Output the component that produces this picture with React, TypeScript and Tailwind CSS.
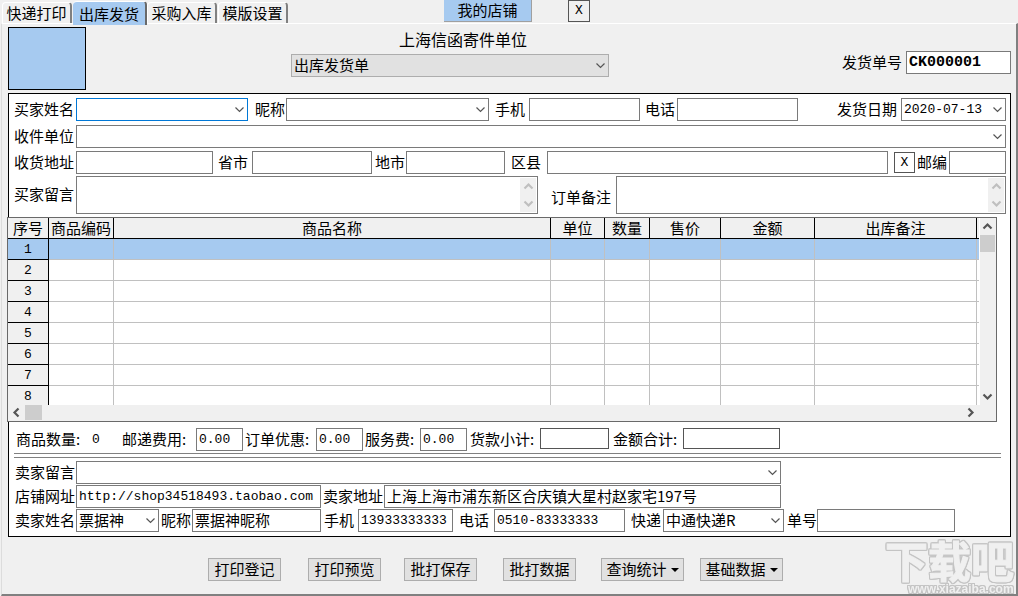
import type { ReactNode } from 'react'

const MONO = "font-['Liberation_Mono','Noto_Sans_CJK_SC',monospace]"

function Chevron({ className = '', dir = 'down', bold = false }: { className?: string; dir?: 'up' | 'down' | 'left' | 'right'; bold?: boolean }) {
  const d = {
    down: 'M1.5 3.5 L5.5 7.5 L9.5 3.5',
    up: 'M1.5 7.5 L5.5 3.5 L9.5 7.5',
    left: 'M7.5 1.5 L3.5 5.5 L7.5 9.5',
    right: 'M3.5 1.5 L7.5 5.5 L3.5 9.5',
  }[dir]
  return (
    <svg viewBox="0 0 11 11" className={`h-[11px] w-[11px] ${className}`} fill="none" stroke="currentColor" strokeWidth={bold ? 2.2 : 1.2}>
      <path d={d} />
    </svg>
  )
}

function Label({ htmlFor, className = '', children }: { htmlFor: string; className?: string; children: ReactNode }) {
  return (
    <label htmlFor={htmlFor} className={`shrink-0 whitespace-nowrap leading-[21px] ${className}`}>
      {children}
    </label>
  )
}

function Text({ id, value = '', className = '' }: { id: string; value?: string; className?: string }) {
  return (
    <input
      id={id}
      type="text"
      defaultValue={value}
      className={`h-[23px] min-w-0 border border-[#7a7a7a] bg-white px-[2px] outline-none ${className}`}
    />
  )
}

function Combo({
  id,
  value = '',
  className = '',
  look = 'border-[#7a7a7a] bg-white pb-[2px]',
}: {
  id: string
  value?: string
  className?: string
  look?: string
}) {
  return (
    <div className={`relative h-[23px] min-w-0 ${className}`}>
      <select id={id} defaultValue={value} className={`block h-full w-full appearance-none border px-[2px] outline-none ${look}`}>
        <option value={value}>{value}</option>
      </select>
      <Chevron className="pointer-events-none absolute top-[6px] right-[3px] text-[#555]" />
    </div>
  )
}

function Note({ id, className = '' }: { id: string; className?: string }) {
  return (
    <div className={`flex h-[38px] min-w-0 border border-[#7a7a7a] bg-white p-px ${className}`}>
      <textarea id={id} className="min-w-0 flex-1 resize-none outline-none" />
      <div className="flex w-4 flex-col items-center justify-between bg-[#f0f0f0] py-[3px] text-[#bfbfbf]">
        <Chevron dir="up" bold />
        <Chevron bold />
      </div>
    </div>
  )
}

const columns = [
  { name: '序号', width: 'w-[41px]' },
  { name: '商品编码', width: 'w-[65px]' },
  { name: '商品名称', width: '' },
  { name: '单位', width: 'w-[54px]' },
  { name: '数量', width: 'w-[45px]' },
  { name: '售价', width: 'w-[71px]' },
  { name: '金额', width: 'w-[94px]' },
  { name: '出库备注', width: 'w-[162px]' },
]

function Grid() {
  return (
    <div className="mt-[3px] mr-[13px] -ml-[2px] border border-[#696969] bg-white">
      <div className="flex h-[187px]">
        <div className="mr-px min-w-0 flex-1 overflow-hidden">
          <table className="w-full table-fixed border-separate border-spacing-0">
            <thead>
              <tr className="h-[21px] bg-[#f0f0f0]">
                {columns.map((c) => (
                  <th key={c.name} className={`border-r border-b border-black p-0 text-center leading-[18px] font-normal whitespace-nowrap ${c.width}`}>
                    {c.name}
                  </th>
                ))}
                <th className="w-[2px] border-b border-black p-0" />
              </tr>
            </thead>
            <tbody>
              {[1, 2, 3, 4, 5, 6, 7, 8].map((n) => (
                <tr key={n} className={`h-[21px] ${n === 1 ? 'bg-[#a6caf0]' : 'bg-white'}`}>
                  <th
                    className={`border-r border-b border-black p-0 pt-[2px] text-[13px] leading-[18px] font-normal ${MONO} ${n === 1 ? 'bg-[#a6caf0]' : 'bg-[#f0f0f0]'}`}
                  >
                    {n}
                  </th>
                  {columns.slice(1).map((c) => (
                    <td key={c.name} className="border-r border-b border-[#c0c0c0] p-0" />
                  ))}
                  <td className="border-b border-[#c0c0c0] p-0" />
                </tr>
              ))}
            </tbody>
          </table>
        </div>
        <div className="flex w-4 flex-col bg-[#f0f0f0] text-[#555]">
          <div className="flex h-[17px] items-center pl-[2px]">
            <Chevron dir="up" bold />
          </div>
          <div className="h-[17px] w-[15px] bg-[#cdcdcd]" />
          <div className="mt-auto flex h-[17px] items-center pl-[2px]">
            <Chevron bold />
          </div>
        </div>
      </div>
      <div className="flex h-4 bg-[#f0f0f0] pr-[17px] text-[#555]">
        <div className="flex h-[15px] w-[17px] items-center justify-center">
          <Chevron dir="left" bold />
        </div>
        <div className="h-[15px] w-[17px] bg-[#cdcdcd]" />
        <div className="ml-auto flex h-[15px] w-[17px] items-center justify-center">
          <Chevron dir="right" bold />
        </div>
      </div>
    </div>
  )
}

function Tab({ label, active = false }: { label: string; active?: boolean }) {
  return (
    <button
      type="button"
      className={
        active
          ? 'relative z-10 -mb-[2px] h-6 w-[74px] rounded-t-sm border-t border-r-2 border-t-white border-r-[#696969] bg-[#a6caf0] leading-[22px]'
          : 'mr-px h-[21px] w-[70px] rounded-t-sm border-t border-r-2 border-l border-t-white border-r-[#808080] border-l-white leading-5'
      }
    >
      {label}
    </button>
  )
}

function Action({ label, menu = false, className }: { label: string; menu?: boolean; className: string }) {
  return (
    <button
      type="button"
      className={`flex h-[23px] items-center justify-center gap-1 border border-[#adadad] bg-[#e1e1e1] pb-[2px] whitespace-nowrap ${className}`}
    >
      {label}
      {menu && <span className="mt-[2px] border-x-4 border-t-4 border-x-transparent border-t-black" />}
    </button>
  )
}

export default function App() {
  return (
    <div className="relative flex min-h-screen flex-col overflow-hidden bg-[#f0f0f0] font-['Noto_Sans_CJK_SC',sans-serif] text-[15px] leading-5 text-black">
      <header className="flex h-[23px] items-end pl-[2px]">
        <Tab label="快递打印" />
        <Tab label="出库发货" active />
        <Tab label="采购入库" />
        <Tab label="模版设置" />
        <button type="button" className="ml-[155px] h-[22px] w-[88px] self-start border-r border-b border-[#a0a0a0] bg-[#a6caf0] pb-[2px] leading-[18px]">
          我的店铺
        </button>
        <button type="button" className={`ml-9 h-[22px] w-[22px] self-start border border-[#555] text-[13px] ${MONO}`}>
          X
        </button>
      </header>

      <main className="ml-px flex flex-1 flex-col border-t border-r-2 border-b-2 border-l border-t-white border-r-[#808080] border-b-[#808080] border-l-[#dcdcdc] pr-[5px] pl-[6px]">
        <div className="flex items-start pt-[3px]">
          <div className="h-[63px] w-[78px] border border-black bg-[#a6caf0]" />
          <div className="ml-[205px] w-[318px]">
            <h1 className="mt-[2px] ml-[26px] h-[25px] text-center text-[16px] leading-[21px] font-normal">上海信函寄件单位</h1>
            <Combo id="docType" value="出库发货单" look="border-[#adadad] bg-[#e1e1e1] pb-[2px]" />
          </div>
          <div className="mt-6 ml-auto flex">
            <Label htmlFor="docNo" className="w-16">发货单号</Label>
            <Text id="docNo" value="CK000001" className={`w-[105px] text-[15px] font-bold ${MONO}`} />
          </div>
        </div>

        <form className="mt-[3px] border border-black bg-white pt-1 pb-1">
          <div className="flex pr-1 pl-[5px]">
            <Label htmlFor="buyer" className="w-[62px]">买家姓名</Label>
            <Combo id="buyer" className="w-[172px]" look="border-[#0078d7] bg-white" />
            <Label htmlFor="nick" className="w-[38px] pl-[7px]">昵称</Label>
            <Combo id="nick" className="w-[203px]" />
            <Label htmlFor="mobile" className="w-10 pl-[6px]">手机</Label>
            <Text id="mobile" className="w-[111px]" />
            <Label htmlFor="phone" className="w-[37px] pl-[5px]">电话</Label>
            <Text id="phone" className="w-[121px]" />
            <Label htmlFor="date" className="ml-auto w-16">发货日期</Label>
            <Combo id="date" value="2020-07-13" className={`w-[105px] text-[13px] ${MONO}`} look="border-[#7a7a7a] bg-white" />
          </div>
          <div className="mt-1 flex pr-1 pl-[5px]">
            <Label htmlFor="company" className="w-[62px]">收件单位</Label>
            <Combo id="company" className="flex-1" />
          </div>
          <div className="mt-[3px] flex pr-1 pl-[5px]">
            <Label htmlFor="address" className="w-[62px]">收货地址</Label>
            <Text id="address" className="w-[137px]" />
            <Label htmlFor="province" className="w-[39px] pl-[5px]">省市</Label>
            <Text id="province" className="w-[120px]" />
            <Label htmlFor="city" className="w-[34px] pl-[3px]">地市</Label>
            <Text id="city" className="w-[99px]" />
            <Label htmlFor="district" className="w-[42px] pl-[6px]">区县</Label>
            <Text id="district" className="flex-1" />
            <button type="button" className={`mt-px ml-[6px] h-[21px] w-[21px] border border-[#555] text-[13px] ${MONO}`}>
              X
            </button>
            <Label htmlFor="zip" className="w-[34px] pl-[2px]">邮编</Label>
            <Text id="zip" className="w-[57px]" />
          </div>
          <div className="mt-[2px] flex items-center pr-1 pl-[5px]">
            <Label htmlFor="buyerNote" className="w-[62px] pb-1">买家留言</Label>
            <Note id="buyerNote" className="w-[462px]" />
            <Label htmlFor="orderNote" className="w-[78px] pt-[2px] pl-[13px]">订单备注</Label>
            <Note id="orderNote" className="flex-1" />
          </div>

          <Grid />

          <div className="mt-[6px] flex pl-[7px]">
            <span className="w-[76px] leading-[21px]">商品数量:</span>
            <span className={`w-[30px] text-[13px] leading-[23px] ${MONO}`}>0</span>
            <Label htmlFor="postage" className="w-[74px]">邮递费用:</Label>
            <Text id="postage" value="0.00" className={`w-[47px] text-[13px] ${MONO}`} />
            <Label htmlFor="discount" className="w-[73px] pl-[2px]">订单优惠:</Label>
            <Text id="discount" value="0.00" className={`w-[47px] text-[13px] ${MONO}`} />
            <Label htmlFor="service" className="w-[57px] pl-[2px]">服务费:</Label>
            <Text id="service" value="0.00" className={`w-[47px] text-[13px] ${MONO}`} />
            <Label htmlFor="goods" className="w-[73px] pl-[3px]">货款小计:</Label>
            <output id="goods" className="h-[21px] w-[69px] border border-[#555]" />
            <Label htmlFor="total" className="w-[74px] pl-1">金额合计:</Label>
            <output id="total" className="h-[21px] w-[97px] border border-[#555]" />
          </div>
          <div className="mt-[2px] mr-[9px] ml-[5px] h-[5px] border-y border-[#808080]" />

          <div className="mt-[3px] flex pl-[6px]">
            <Label htmlFor="sellerNote" className="w-[61px]">卖家留言</Label>
            <Combo id="sellerNote" className="w-[705px]" />
          </div>
          <div className="mt-px flex pl-[6px]">
            <Label htmlFor="shopUrl" className="w-[61px]">店铺网址</Label>
            <Text id="shopUrl" value="http://shop34518493.taobao.com" className={`w-[245px] text-[13px] ${MONO}`} />
            <Label htmlFor="sellerAddress" className="w-[63px] pl-[2px]">卖家地址</Label>
            <Text id="sellerAddress" value="上海上海市浦东新区合庆镇大星村赵家宅197号" className="w-[397px] pb-[2px]" />
          </div>
          <div className="mt-px flex pl-[6px]">
            <Label htmlFor="seller" className="w-[61px]">卖家姓名</Label>
            <Combo id="seller" value="票据神" className="w-[83px]" />
            <Label htmlFor="sellerNick" className="w-[33px] pl-[2px]">昵称</Label>
            <Text id="sellerNick" value="票据神昵称" className="w-[129px] pb-[2px]" />
            <Label htmlFor="sellerMobile" className="w-[37px] pl-[3px]">手机</Label>
            <Text id="sellerMobile" value="13933333333" className={`w-[95px] text-[13px] ${MONO}`} />
            <Label htmlFor="sellerPhone" className="w-[41px] pl-[6px]">电话</Label>
            <Text id="sellerPhone" value="0510-83333333" className={`w-[131px] text-[13px] ${MONO}`} />
            <Label htmlFor="express" className="w-[38px] pl-[6px]">快递</Label>
            <Combo id="express" value="中通快递R" className="w-[121px]" />
            <Label htmlFor="waybill" className="w-[33px] pl-[3px]">单号</Label>
            <Text id="waybill" className="w-[138px]" />
          </div>
        </form>

        <div className="mt-[21px] flex pl-[200px]">
          <Action label="打印登记" className="w-[73px]" />
          <Action label="打印预览" className="ml-[27px] w-[73px]" />
          <Action label="批打保存" className="ml-[23px] w-[73px]" />
          <Action label="批打数据" className="ml-[26px] w-[73px]" />
          <Action label="查询统计" menu className="ml-[25px] w-[83px]" />
          <Action label="基础数据" menu className="ml-4 w-[83px]" />
        </div>
      </main>

      <div className="pointer-events-none absolute right-0 bottom-0" aria-hidden="true">
        <svg
          viewBox="0 0 136 64"
          className="h-16 w-[136px]"
          fill="#f0f0f0"
          stroke="#f0f0f0"
          style={{ filter: 'drop-shadow(1px 0 0 #c4c4c4) drop-shadow(-1px 0 0 #c4c4c4) drop-shadow(0 1px 0 #c4c4c4) drop-shadow(0 -1px 0 #c4c4c4)' }}
        >
          <text x="3" y="46" fontFamily="Noto Sans CJK SC" fontSize="43" fontWeight="700" strokeWidth="1">
            下载吧
          </text>
          <text x="26" y="61" fontFamily="Liberation Sans" fontSize="12" fontWeight="700" strokeWidth="0">
            www.xiazaiba.com
          </text>
        </svg>
      </div>
    </div>
  )
}
